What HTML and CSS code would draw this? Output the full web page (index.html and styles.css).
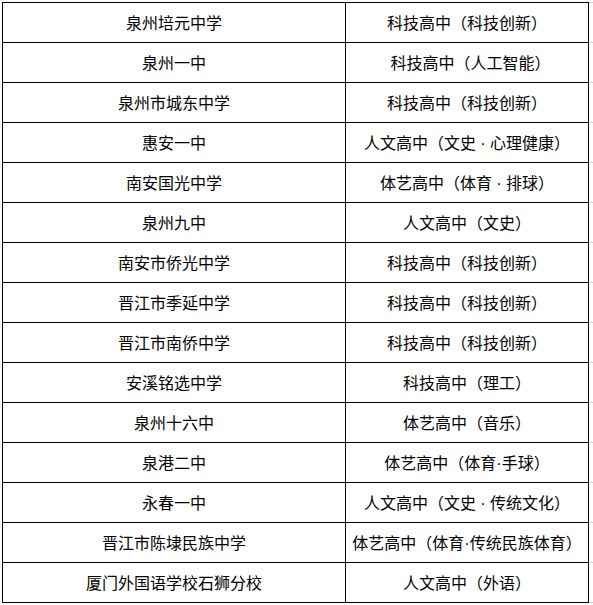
FILE: index.html
```html
<!DOCTYPE html>
<html lang="zh-CN">
<head>
<meta charset="utf-8">
<title>学校特色高中</title>
<link rel="stylesheet" href="styles.css">
</head>
<body>
<div class="wrap">
  <div class="grid">
    <div class="c l">泉州培元中学</div><div class="c r">科技高中（科技创新）</div><div class="s"></div>
    <div class="c l">泉州一中</div><div class="c r shift">科技高中（人工智能）</div><div class="s"></div>
    <div class="c l">泉州市城东中学</div><div class="c r">科技高中（科技创新）</div><div class="s"></div>
    <div class="c l">惠安一中</div><div class="c r">人文高中（文史&nbsp;·&nbsp;心理健康）</div><div class="s"></div>
    <div class="c l">南安国光中学</div><div class="c r">体艺高中（体育&nbsp;·&nbsp;排球）</div><div class="s"></div>
    <div class="c l">泉州九中</div><div class="c r">人文高中（文史）</div><div class="s"></div>
    <div class="c l">南安市侨光中学</div><div class="c r">科技高中（科技创新）</div><div class="s"></div>
    <div class="c l">晋江市季延中学</div><div class="c r">科技高中（科技创新）</div><div class="s"></div>
    <div class="c l">晋江市南侨中学</div><div class="c r">科技高中（科技创新）</div><div class="s"></div>
    <div class="c l">安溪铭选中学</div><div class="c r">科技高中（理工）</div><div class="s"></div>
    <div class="c l">泉州十六中</div><div class="c r">体艺高中（音乐）</div><div class="s"></div>
    <div class="c l">泉港二中</div><div class="c r">体艺高中（体育·手球）</div><div class="s"></div>
    <div class="c l">永春一中</div><div class="c r">人文高中（文史&nbsp;·&nbsp;传统文化）</div><div class="s"></div>
    <div class="c l">晋江市陈埭民族中学</div><div class="c r">体艺高中（体育·传统民族体育）</div><div class="s"></div>
    <div class="c l">厦门外国语学校石狮分校</div><div class="c r">人文高中（外语）</div><div class="s"></div>
  </div>
</div>
</body>
</html>
```
FILE: styles.css
```css
html, body {
  margin: 0;
  padding: 0;
  background: #ffffff;
}
.wrap {
  padding: 2px 0 0 2px;
}
.grid {
  display: grid;
  grid-template-columns: 343px 243px 4px;
  border-left: 1px solid #000;
  box-sizing: border-box;
  width: 591px;
  font-family: "Liberation Sans", "Noto Sans CJK SC", sans-serif;
  font-size: 16px;
  color: #000;
}
.c {
  box-sizing: border-box;
  height: 40px;
  border-right: 1px solid #000;
  border-bottom: 1px solid #000;
  display: flex;
  align-items: center;
  justify-content: center;
  padding-top: 2px;
  line-height: 20px;
  white-space: nowrap;
}
.s {
  box-sizing: border-box;
  height: 40px;
  border-bottom: 1px solid #d0d0d0;
}
.grid > :nth-child(-n+3) {
  height: 41px;
  border-top: 1px solid #000;
}
.grid > .s:nth-child(3) {
  border-top-color: #d0d0d0;
}
.shift {
  padding-left: 7px;
}
```
